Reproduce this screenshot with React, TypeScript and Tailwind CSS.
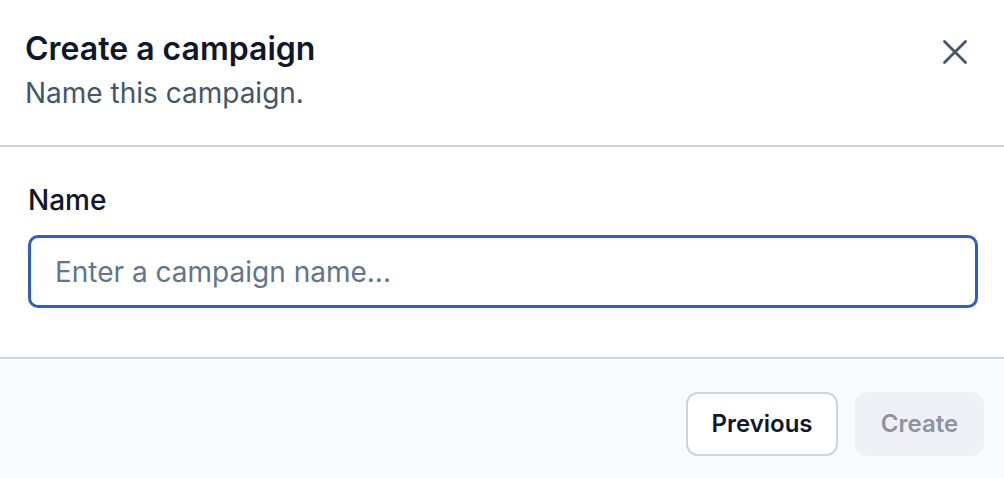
import React, { useState } from "react";

const App = () => {
  const [name, setName] = useState("");

  return (
    <div
      className="flex h-[478px] w-full flex-col overflow-hidden bg-white"
      style={{ fontFamily: "Inter, 'Noto Sans', sans-serif" }}
    >
      <div className="flex items-start justify-between border-b-2 border-slate-300 pl-[25px] pr-[37px] pt-[29px] pb-[34px]">
        <div className="flex flex-col gap-[6px]">
          <h1 className="text-[32px] leading-[40px] font-semibold text-slate-900">
            Create a campaign
          </h1>
          <p className="text-[28px] leading-[36px] text-slate-600">
            Name this campaign.
          </p>
        </div>
        <button type="button" className="mt-[11px] text-slate-600">
          <svg width="24" height="24" viewBox="0 0 24 24" fill="none">
            <path
              d="M1.5 1.5 22.5 22.5M22.5 1.5 1.5 22.5"
              stroke="currentColor"
              strokeWidth="2.8"
              strokeLinecap="round"
            />
          </svg>
        </button>
      </div>

      <div className="flex flex-col gap-[17px] px-[28px] pt-[35px] pb-[49px]">
        <label
          htmlFor="name"
          className="text-[28px] leading-[36px] font-medium text-slate-900"
        >
          Name
        </label>
        <input
          id="name"
          type="text"
          value={name}
          onChange={(e) => setName(e.target.value)}
          placeholder="Enter a campaign name..."
          className="h-[73px] w-[950px] rounded-[10px] border-[3px] border-[#2b5fc7] px-[24px] text-[28px] text-slate-900 placeholder:text-slate-500 focus:outline-none"
        />
      </div>

      <div className="flex flex-1 justify-end gap-[17px] border-t-2 border-slate-300 bg-slate-50 pt-[33px] pr-[20px]">
        <button
          type="button"
          className="h-[64px] w-[152px] rounded-[12px] border-2 border-slate-300 bg-white text-[24px] font-semibold text-slate-900"
        >
          Previous
        </button>
        <button
          type="button"
          disabled
          className="h-[64px] w-[129px] rounded-[12px] bg-[#eef0f5] text-[24px] font-semibold text-[#8e939f]"
        >
          Create
        </button>
      </div>
    </div>
  );
};

export default App;
